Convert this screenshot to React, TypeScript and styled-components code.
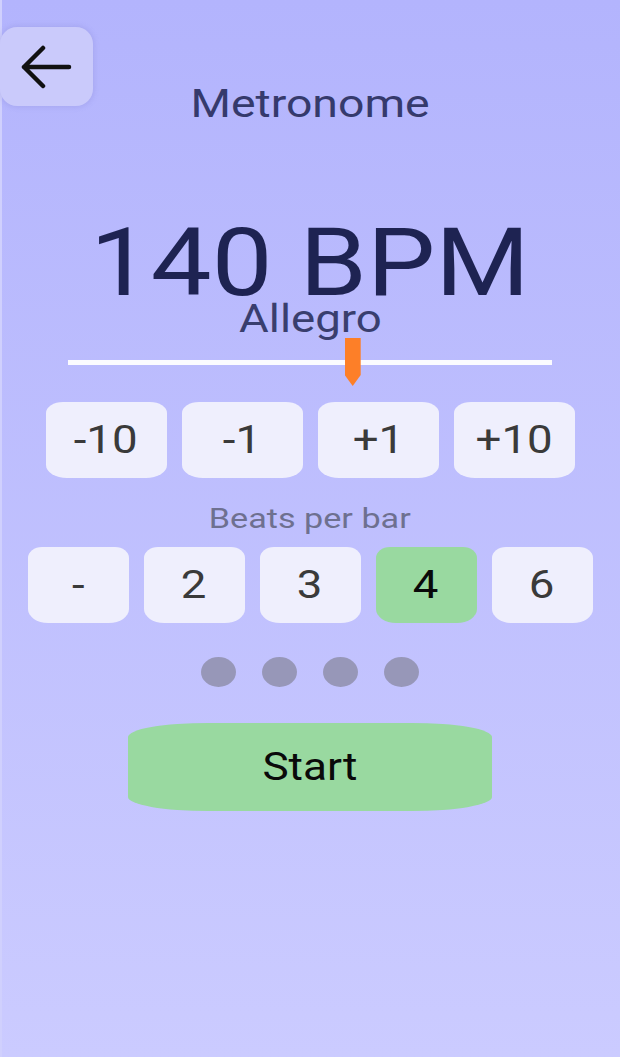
import styled, { createGlobalStyle } from "styled-components";
import { useState } from "react";

const GlobalStyle = createGlobalStyle`
	html, body {
		margin: 0;
		padding: 0;
	}
	body {
		font-family: Roboto, "Noto Sans", "Liberation Sans", sans-serif;
	}
`;

const MIN_BPM = 20;
const MAX_BPM = 224;

function tempoName(bpm: number) {
	if (bpm < 60) return "Largo";
	if (bpm < 76) return "Adagio";
	if (bpm < 108) return "Andante";
	if (bpm < 120) return "Moderato";
	if (bpm < 168) return "Allegro";
	return "Presto";
}

function BackArrow() {
	return (
		<svg width="52" height="44" viewBox="0 0 52 44" fill="none">
			<path
				d="M3 22 H48 M3 22 L22 3 M3 22 L22 41"
				stroke="#111"
				strokeWidth="4.5"
				strokeLinecap="round"
				strokeLinejoin="round"
			/>
		</svg>
	);
}

function App() {
	const [bpm, setBpm] = useState(140);
	const [beats, setBeats] = useState(4);

	const pct = (bpm - MIN_BPM) / (MAX_BPM - MIN_BPM);
	const steps = [-10, -1, 1, 10];
	const beatOptions = [0, 2, 3, 4, 6];

	function change(delta: number) {
		setBpm((b) => Math.min(MAX_BPM, Math.max(MIN_BPM, b + delta)));
	}

	return (
		<>
			<GlobalStyle />
			<Page>
				<Header>
					<BackButton aria-label="back">
						<BackArrow />
					</BackButton>
					<Title>
						<Wide $x={1.22}>Metronome</Wide>
					</Title>
				</Header>

				<Bpm>
					<Wide $x={1.14}>{bpm} BPM</Wide>
				</Bpm>
				<TempoName>
					<Wide>{tempoName(bpm)}</Wide>
				</TempoName>

				<Slider>
					<Track />
					<Thumb style={{ left: `${pct * 100}%` }} />
				</Slider>

				<StepRow>
					{steps.map((s) => (
						<StepButton key={s} onClick={() => change(s)}>
							<Wide>{s > 0 ? `+${s}` : `${s}`}</Wide>
						</StepButton>
					))}
				</StepRow>

				<BeatsLabel>
					<Wide $x={1.22}>Beats per bar</Wide>
				</BeatsLabel>

				<BeatRow>
					{beatOptions.map((b) => (
						<BeatButton
							key={b}
							$active={b === beats}
							onClick={() => b > 0 && setBeats(b)}
						>
							<Wide>{b === 0 ? "-" : b}</Wide>
						</BeatButton>
					))}
				</BeatRow>

				<Dots>
					{Array.from({ length: beats }).map((_, i) => (
						<Dot key={i} />
					))}
				</Dots>

				<StartButton>
					<Wide $x={1.16}>Start</Wide>
				</StartButton>
			</Page>
		</>
	);
}

export default App;

const Page = styled.div`
	width: 620px;
	min-height: 1057px;
	box-sizing: border-box;
	background: linear-gradient(180deg, #b3b4fd 0%, #cbcbff 100%);
	box-shadow: inset 2px 0 0 #d0d0fd;
	display: flex;
	flex-direction: column;
	align-items: center;
	overflow: hidden;
`;

const Wide = styled.span<{ $x?: number }>`
	display: inline-block;
	transform: scaleX(${(p) => p.$x ?? 1.2});
	transform-origin: center;
	white-space: nowrap;
`;

const Header = styled.div`
	align-self: stretch;
	display: grid;
	grid-template-columns: 93px 1fr 93px;
`;

const BackButton = styled.button`
	margin-top: 27px;
	width: 93px;
	height: 79px;
	border: none;
	border-radius: 17px;
	background: #cacafb;
	box-shadow: 0 0 4px 2px rgba(140, 140, 220, 0.28);
	display: flex;
	align-items: center;
	justify-content: center;
	padding: 0;
	cursor: pointer;
`;

const Title = styled.h1`
	margin: 81px 0 0 0;
	font-size: 38px;
	line-height: 46px;
	font-weight: 400;
	color: #353a6c;
	text-align: center;
`;

const Bpm = styled.div`
	margin-top: 100px;
	font-size: 95px;
	line-height: 72px;
	color: #1e2352;
	text-align: center;
`;

const TempoName = styled.div`
	margin-top: 2px;
	font-size: 38px;
	line-height: 36px;
	color: #393e6e;
	text-align: center;
`;

const Slider = styled.div`
	position: relative;
	margin-top: 1px;
	width: 484px;
	height: 48px;
	display: flex;
	align-items: center;
`;

const Track = styled.div`
	width: 100%;
	height: 5px;
	background: #fbfbff;
`;

const Thumb = styled.div`
	position: absolute;
	top: 0;
	width: 16px;
	height: 48px;
	margin-left: -8px;
	background: #fd7f28;
	clip-path: polygon(0 0, 100% 0, 100% 77%, 50% 100%, 0 77%);
`;

const StepRow = styled.div`
	margin-top: 16px;
	display: grid;
	grid-template-columns: repeat(4, 121px);
	gap: 15px;
`;

const StepButton = styled.button`
	height: 76px;
	border: none;
	border-radius: 17px 17px 21px 21px / 11px 11px 13px 13px;
	background: #efeffd;
	color: #3a3a3a;
	font-family: inherit;
	font-size: 38px;
	display: flex;
	align-items: center;
	justify-content: center;
	padding: 0;
	cursor: pointer;
`;

const BeatsLabel = styled.div`
	margin-top: 24px;
	font-size: 28px;
	line-height: 34px;
	color: #6e7090;
	text-align: center;
`;

const BeatRow = styled.div`
	margin-top: 11px;
	display: grid;
	grid-template-columns: repeat(5, 101px);
	gap: 15px;
`;

const BeatButton = styled.button<{ $active: boolean }>`
	height: 76px;
	border: none;
	border-radius: 14px 14px 20px 20px / 11px 11px 14px 14px;
	background: ${(p) => (p.$active ? "#99d9a0" : "#efeffd")};
	color: ${(p) => (p.$active ? "#0a0a0a" : "#3a3a3a")};
	font-family: inherit;
	font-size: 38px;
	display: flex;
	align-items: center;
	justify-content: center;
	padding: 0;
	cursor: pointer;
`;

const Dots = styled.div`
	margin-top: 34px;
	display: flex;
	gap: 26px;
	height: 30px;
`;

const Dot = styled.div`
	width: 35px;
	height: 30px;
	border-radius: 50%;
	background: #9797b8;
`;

const StartButton = styled.button`
	margin-top: 36px;
	width: 364px;
	height: 88px;
	border: none;
	border-radius: 80px / 14px;
	background: #99d9a0;
	color: #0a0a0a;
	font-family: inherit;
	font-size: 38px;
	display: flex;
	align-items: center;
	justify-content: center;
	padding: 0;
	cursor: pointer;
`;
